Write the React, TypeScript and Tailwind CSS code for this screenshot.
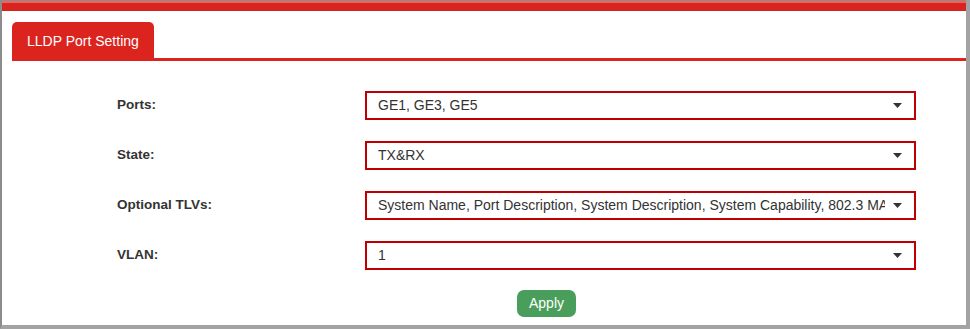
const fields = [
  { label: "Ports:", value: "GE1, GE3, GE5" },
  { label: "State:", value: "TX&RX" },
  {
    label: "Optional TLVs:",
    value:
      "System Name, Port Description, System Description, System Capability, 802.3 MAC-PHY, 802.3 Link Aggregation",
  },
  { label: "VLAN:", value: "1" },
];

function Caret() {
  return (
    <svg width="9" height="5" viewBox="0 0 9 5" className="shrink-0">
      <path d="M0 0 L9 0 L4.5 5 Z" fill="#333" />
    </svg>
  );
}

export default function App() {
  return (
    <div className="w-[970px] h-[329px] flex flex-col bg-white border-l-2 border-l-[#8c8c8c] border-r-4 border-r-[#a3a3a3] border-b-4 border-b-[#a3a3a3] font-['Liberation_Sans',Arial,sans-serif] text-[#333]">
      <div className="h-[11px] border-t border-[#8c8c8c] bg-[#dc241f] border-b border-b-[#c22a25] shadow-[inset_0_2px_0_#ea6560]" />

      <div className="pl-[10px] pt-[11px]">
        <div className="flex items-end border-b-[3px] border-[#dc241f]">
          <div className="h-[36px] px-[15px] pt-[2px] flex items-center bg-[#dc241f] rounded-t-[5px] text-white text-[14px]">
            LLDP Port Setting
          </div>
        </div>
      </div>

      <div className="flex flex-col gap-[21px] pt-[30px] pl-[115px]">
        {fields.map((f) => (
          <div key={f.label} className="flex items-center">
            <div className="w-[248px] text-[13.5px] font-bold">{f.label}</div>
            <div className="w-[551px] h-[29px] border-2 border-[#c00000] flex items-center pl-[11px] pr-[12px] gap-2 text-[14px]">
              <span className="flex-1 overflow-hidden whitespace-nowrap">{f.value}</span>
              <Caret />
            </div>
          </div>
        ))}
      </div>

      <div className="pl-[515px] pt-[20px]">
        <button className="w-[59px] h-[27px] rounded-[7px] bg-[#4a9e5b] text-white text-[14px]">
          Apply
        </button>
      </div>
    </div>
  );
}
